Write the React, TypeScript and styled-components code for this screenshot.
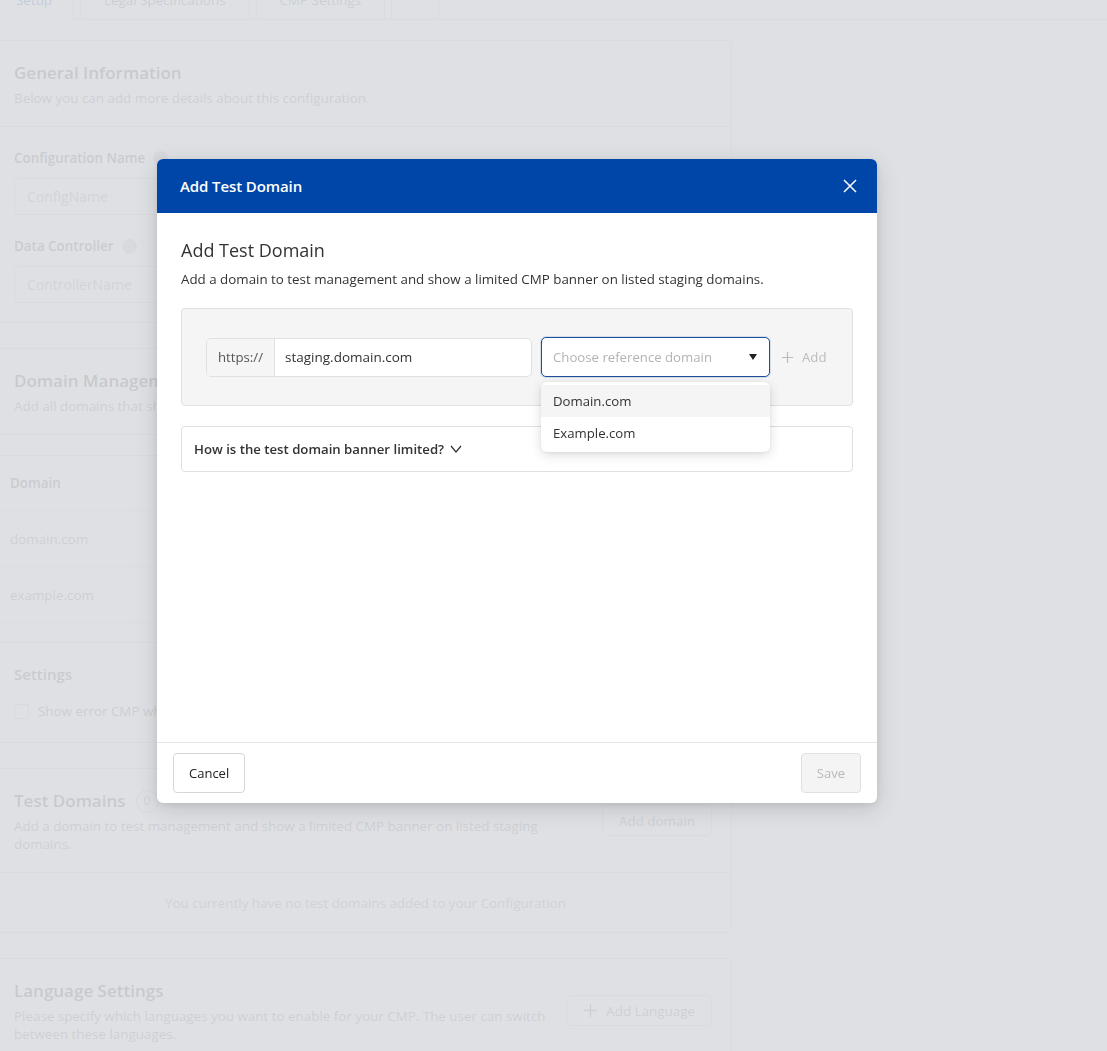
import styled, { createGlobalStyle } from "styled-components";

const GlobalStyle = createGlobalStyle`
    html, body {
        margin: 0;
        padding: 0;
        background: #ffffff;
        font-family: "Open Sans", "Noto Sans", sans-serif;
        color: #333333;
        overflow: hidden;
    }
    * {
        box-sizing: border-box;
    }
`;

const Page = styled.div`
    width: 1107px;
    height: 1051px;
    overflow: hidden;
    position: relative;
    font-size: 13.4px;
`;

const TabRow = styled.div`
    display: flex;
    align-items: stretch;
    gap: 6px;
    height: 40px;
    margin-top: -20px;
    border-bottom: 1px solid #cfcfcf;
`;

const Tab = styled.div<{ $active?: boolean }>`
    display: flex;
    align-items: center;
    min-width: 40px;
    padding: ${(p) => (p.$active ? "0 21px 0 16px" : "0 23px")};
    border: 1px solid #cfcfcf;
    border-top: none;
    border-left: ${(p) => (p.$active ? "none" : "1px solid #cfcfcf")};
    border-bottom: ${(p) => (p.$active ? "1px solid #ffffff" : "none")};
    margin-bottom: ${(p) => (p.$active ? "-1px" : "0")};
    color: ${(p) => (p.$active ? "#0047a9" : "#555555")};
    font-size: 13.4px;
    background: #ffffff;
`;

const Stack = styled.div`
    display: flex;
    flex-direction: column;
    gap: 25px;
    padding-top: 20px;
    width: 732px;
`;

const Card = styled.section`
    border: 1px solid #d2d2d2;
    border-left: none;
    border-radius: 0 4px 4px 0;
    background: #ffffff;
`;

const CardHead = styled.div<{ $split?: boolean }>`
    display: flex;
    justify-content: space-between;
    align-items: ${(p) => (p.$split ? "flex-start" : "stretch")};
    gap: 14px;
    padding: 20px 19px 19px 14px;
    border-bottom: 1px solid #d2d2d2;
`;

const HeadText = styled.div`
    display: flex;
    flex-direction: column;
    flex: 0 1 545px;
`;

const Title = styled.h2`
    margin: 0;
    display: flex;
    align-items: center;
    gap: 10px;
    font-size: 17px;
    font-weight: 600;
    line-height: 24px;
    color: #333333;
`;

const Sub = styled.p`
    margin: 4px 0 0;
    font-size: 13.4px;
    line-height: 18px;
    color: #666666;
`;

const CountBadge = styled.span`
    display: inline-flex;
    align-items: center;
    justify-content: center;
    width: 23px;
    height: 23px;
    border-radius: 50%;
    border: 1px solid #b8b8b8;
    font-size: 12px;
    font-weight: 400;
    color: #888888;
`;

const Fields = styled.div`
    display: flex;
    flex-direction: column;
    padding: 22px 14px 19px;
    gap: 22px;
`;

const Field = styled.div`
    display: flex;
    flex-direction: column;
    gap: 11px;
`;

const Label = styled.label`
    display: flex;
    align-items: center;
    gap: 8px;
    height: 18px;
    font-size: 13.4px;
    font-weight: 600;
    color: #444444;
`;

const InfoDot = styled.span`
    display: inline-block;
    width: 15px;
    height: 15px;
    border-radius: 50%;
    background: #bdbdbd;
`;

const TextBox = styled.div`
    height: 37px;
    border: 1px solid #d2d2d2;
    border-radius: 4px;
    padding: 0 12px;
    display: flex;
    align-items: center;
    color: #888888;
    font-size: 14px;
`;

const Table = styled.div`
    margin-top: 20px;
    border-top: 1px solid #d2d2d2;
`;

const Row = styled.div<{ $head?: boolean }>`
    display: flex;
    align-items: center;
    height: ${(p) => (p.$head ? "55px" : "56px")};
    padding: 0 10px;
    border-bottom: 1px solid #dcdcdc;
    font-weight: ${(p) => (p.$head ? 600 : 400)};
    color: ${(p) => (p.$head ? "#444444" : "#666666")};
`;

const SettingsBlock = styled.div`
    margin-top: 19px;
    border-top: 1px solid #d2d2d2;
    padding: 20px 14px 22px;
    display: flex;
    flex-direction: column;
    gap: 17px;
`;

const SmallTitle = styled.h3`
    margin: 0;
    font-size: 15px;
    font-weight: 600;
    line-height: 22px;
    color: #444444;
`;

const CheckRow = styled.div`
    display: flex;
    align-items: center;
    gap: 9px;
    line-height: 18px;
    color: #555555;
`;

const CheckBox = styled.span`
    width: 15px;
    height: 15px;
    border: 1px solid #bbbbbb;
    border-radius: 2px;
`;

const GhostButton = styled.button`
    flex: none;
    display: inline-flex;
    align-items: center;
    gap: 8px;
    height: 31px;
    padding: 0 16px;
    margin-top: 16px;
    border: 1px solid #cfcfcf;
    border-radius: 4px;
    background: #ffffff;
    font-family: inherit;
    font-size: 13.4px;
    color: #666666;
    white-space: nowrap;
`;

const EmptyNote = styled.div`
    height: 59px;
    display: flex;
    align-items: center;
    justify-content: center;
    color: #777777;
`;

const Overlay = styled.div`
    position: fixed;
    inset: 0;
    background: rgba(218, 220, 225, 0.89);
`;

const Modal = styled.div`
    position: fixed;
    top: 159px;
    left: 157px;
    width: 720px;
    height: 644px;
    display: flex;
    flex-direction: column;
    background: #ffffff;
    border-radius: 6px;
    box-shadow: 0 6px 24px rgba(0, 0, 0, 0.14), 0 2px 6px rgba(0, 0, 0, 0.08);
    font-size: 13.2px;
    color: #333333;
`;

const ModalHeader = styled.header`
    height: 54px;
    flex: none;
    display: flex;
    align-items: center;
    justify-content: space-between;
    padding: 0 19px 0 23px;
    background: #0046a8;
    border-radius: 6px 6px 0 0;
    color: #ffffff;
`;

const ModalTitle = styled.h1`
    margin: 0;
    font-size: 15px;
    font-weight: 600;
    letter-spacing: -0.1px;
`;

const CloseBtn = styled.button`
    border: none;
    background: none;
    padding: 0;
    width: 16px;
    height: 16px;
    display: flex;
    color: #ffffff;
`;

const ModalBody = styled.div`
    flex: 1;
    padding: 25px 24px 0;
`;

const BodyTitle = styled.h2`
    margin: 0;
    font-size: 18px;
    font-weight: 500;
    line-height: 24px;
    color: #333333;
`;

const BodyText = styled.p`
    margin: 8px 0 0;
    font-size: 13.35px;
    line-height: 18px;
    color: #333333;
`;

const GreyBox = styled.div`
    margin-top: 20px;
    padding: 28px 24px;
    background: #f5f5f5;
    border: 1px solid #e0e0e0;
    border-radius: 4px;
    display: flex;
    align-items: center;
`;

const InputGroup = styled.div`
    display: flex;
    width: 326px;
    height: 39px;
    border: 1px solid #e0e0e0;
    border-radius: 5px;
    overflow: hidden;
    background: #ffffff;
`;

const Addon = styled.span`
    display: flex;
    align-items: center;
    padding: 0 11px;
    background: #f5f5f5;
    border-right: 1px solid #e0e0e0;
    color: #555555;
`;

const GroupInput = styled.span`
    display: flex;
    align-items: center;
    padding: 0 10px;
    font-size: 13.5px;
    color: #333333;
`;

const SelectWrap = styled.div`
    position: relative;
    margin-left: 9px;
`;

const SelectBox = styled.div`
    width: 229px;
    height: 40px;
    display: flex;
    align-items: center;
    justify-content: space-between;
    padding: 0 12px 0 11px;
    border: 1px solid #1d4f9c;
    border-radius: 5px;
    background: #ffffff;
    color: #b3b3b3;
    box-shadow: 0 0 0 1px rgba(29, 79, 156, 0.15);
`;

const Caret = styled.span`
    width: 0;
    height: 0;
    border-left: 4.5px solid transparent;
    border-right: 4.5px solid transparent;
    border-top: 6px solid #222222;
`;

const Menu = styled.ul`
    position: absolute;
    top: 45px;
    left: 0;
    width: 229px;
    margin: 0;
    padding: 3px 0;
    list-style: none;
    background: #ffffff;
    border-radius: 6px;
    box-shadow: 0 3px 12px rgba(0, 0, 0, 0.14), 0 1px 3px rgba(0, 0, 0, 0.06);
    z-index: 2;
`;

const MenuItem = styled.li<{ $hover?: boolean }>`
    height: 32px;
    display: flex;
    align-items: center;
    padding: 0 12px;
    background: ${(p) => (p.$hover ? "#f5f5f5" : "transparent")};
    color: #333333;
`;

const AddLink = styled.span`
    display: flex;
    align-items: center;
    gap: 8px;
    margin-left: 11px;
    color: #bbbbbb;
`;

const Accordion = styled.div`
    margin-top: 20px;
    height: 46px;
    display: flex;
    align-items: center;
    gap: 6px;
    padding: 0 12px;
    border: 1px solid #e0e0e0;
    border-radius: 4px;
    font-weight: 600;
    color: #333333;
`;

const ModalFooter = styled.footer`
    flex: none;
    height: 61px;
    display: flex;
    align-items: center;
    justify-content: space-between;
    padding: 0 16px;
    border-top: 1px solid #e6e6e6;
`;

const FooterBtn = styled.button<{ $disabled?: boolean }>`
    height: 40px;
    padding: 0 15px;
    border: 1px solid ${(p) => (p.$disabled ? "#e0e0e0" : "#d6d6d6")};
    border-radius: 4px;
    background: ${(p) => (p.$disabled ? "#f4f4f4" : "#ffffff")};
    color: ${(p) => (p.$disabled ? "#b8b8b8" : "#222222")};
    font-family: inherit;
    font-size: 13px;
`;

const PlusIcon = ({ size = 13 }: { size?: number }) => (
    <svg width={size} height={size} viewBox="0 0 14 14" fill="none">
        <path d="M7 1v12M1 7h12" stroke="currentColor" strokeWidth="1.3" />
    </svg>
);

export default function App() {
    return (
        <>
            <GlobalStyle />
            <Page>
                <TabRow>
                    <Tab $active>Setup</Tab>
                    <Tab>Legal Specifications</Tab>
                    <Tab>CMP Settings</Tab>
                    <Tab />
                </TabRow>
                <Stack>
                    <Card>
                        <CardHead>
                            <HeadText>
                                <Title>General Information</Title>
                                <Sub>Below you can add more details about this configuration.</Sub>
                            </HeadText>
                        </CardHead>
                        <Fields>
                            <Field>
                                <Label>
                                    Configuration Name <InfoDot />
                                </Label>
                                <TextBox>ConfigName</TextBox>
                            </Field>
                            <Field>
                                <Label>
                                    Data Controller <InfoDot />
                                </Label>
                                <TextBox>ControllerName</TextBox>
                            </Field>
                        </Fields>
                    </Card>

                    <Card>
                        <CardHead>
                            <HeadText>
                                <Title>Domain Management</Title>
                                <Sub>Add all domains that should use this configuration.</Sub>
                            </HeadText>
                        </CardHead>
                        <Table>
                            <Row $head>Domain</Row>
                            <Row>domain.com</Row>
                            <Row>example.com</Row>
                        </Table>
                        <SettingsBlock>
                            <SmallTitle>Settings</SmallTitle>
                            <CheckRow>
                                <CheckBox />
                                Show error CMP when domain is not listed
                            </CheckRow>
                        </SettingsBlock>
                    </Card>

                    <Card>
                        <CardHead $split>
                            <HeadText>
                                <Title>
                                    Test Domains <CountBadge>0</CountBadge>
                                </Title>
                                <Sub>
                                    Add a domain to test management and show a limited CMP banner on listed
                                    staging domains.
                                </Sub>
                            </HeadText>
                            <GhostButton>Add domain</GhostButton>
                        </CardHead>
                        <EmptyNote>You currently have no test domains added to your Configuration</EmptyNote>
                    </Card>

                    <Card>
                        <CardHead $split>
                            <HeadText>
                                <Title>Language Settings</Title>
                                <Sub>
                                    Please specify which languages you want to enable for your CMP. The user can
                                    switch between these languages.
                                </Sub>
                            </HeadText>
                            <GhostButton>
                                <PlusIcon size={15} />
                                Add Language
                            </GhostButton>
                        </CardHead>
                    </Card>
                </Stack>
            </Page>

            <Overlay />

            <Modal>
                <ModalHeader>
                    <ModalTitle>Add Test Domain</ModalTitle>
                    <CloseBtn aria-label="Close">
                        <svg width="16" height="16" viewBox="0 0 16 16" fill="none">
                            <path d="M2 2l12 12M14 2L2 14" stroke="currentColor" strokeWidth="1.5" />
                        </svg>
                    </CloseBtn>
                </ModalHeader>
                <ModalBody>
                    <BodyTitle>Add Test Domain</BodyTitle>
                    <BodyText>
                        Add a domain to test management and show a limited CMP banner on listed staging domains.
                    </BodyText>
                    <GreyBox>
                        <InputGroup>
                            <Addon>https://</Addon>
                            <GroupInput>staging.domain.com</GroupInput>
                        </InputGroup>
                        <SelectWrap>
                            <SelectBox>
                                Choose reference domain
                                <Caret />
                            </SelectBox>
                            <Menu>
                                <MenuItem $hover>Domain.com</MenuItem>
                                <MenuItem>Example.com</MenuItem>
                            </Menu>
                        </SelectWrap>
                        <AddLink>
                            <PlusIcon size={13} />
                            Add
                        </AddLink>
                    </GreyBox>
                    <Accordion>
                        How is the test domain banner limited?
                        <svg width="12" height="8" viewBox="0 0 12 8" fill="none">
                            <path d="M1 1l5 6 5-6" stroke="#333333" strokeWidth="1.2" />
                        </svg>
                    </Accordion>
                </ModalBody>
                <ModalFooter>
                    <FooterBtn>Cancel</FooterBtn>
                    <FooterBtn $disabled>Save</FooterBtn>
                </ModalFooter>
            </Modal>
        </>
    );
}
